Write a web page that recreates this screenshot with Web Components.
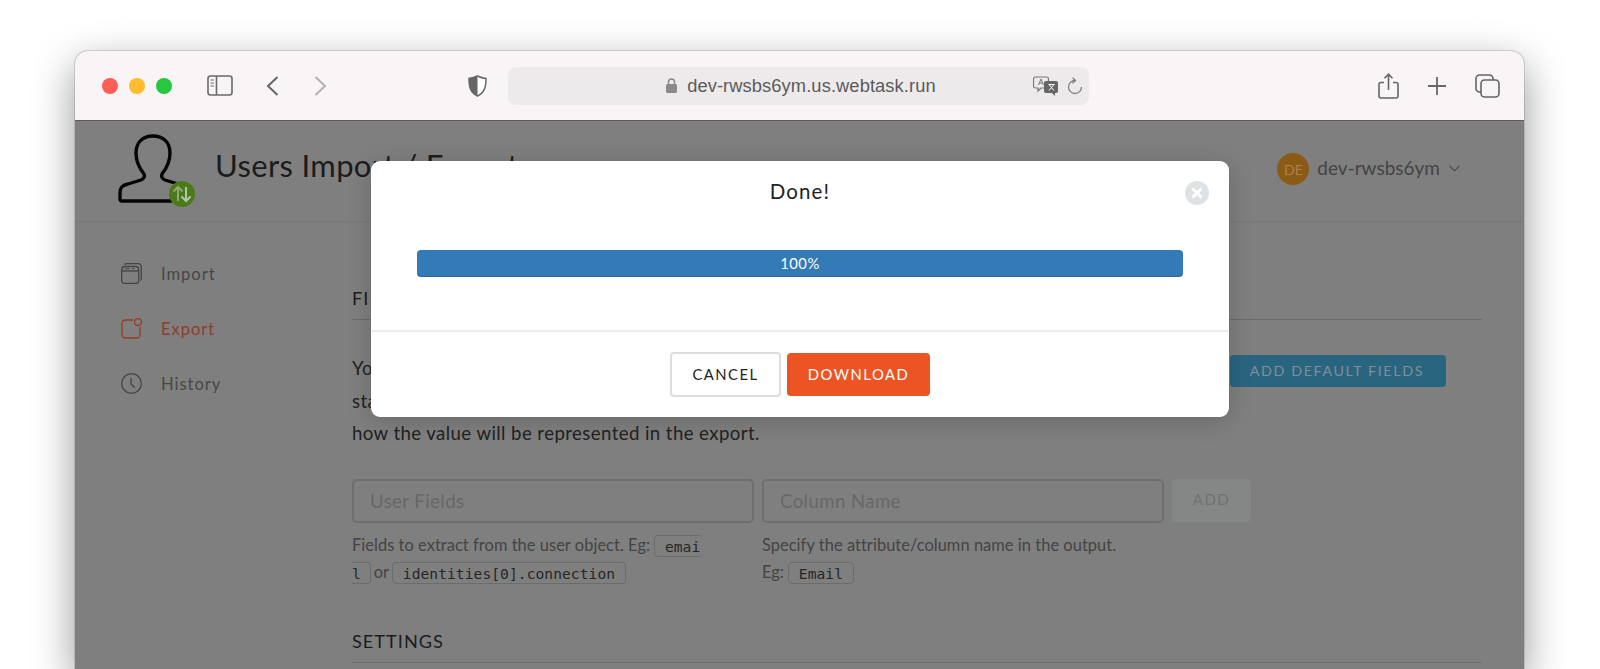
<!doctype html>
<html><head><meta charset="utf-8"><title>Users Import / Export</title>
<style>
html,body{margin:0;height:669px;overflow:hidden;background:#fff;font-family:Lato,"Noto Sans",sans-serif}
</style></head><body>
<browser-window>
  <browser-toolbar slot="toolbar"></browser-toolbar>
  <app-header></app-header>
  <app-body></app-body>
  <modal-dialog slot="modal"></modal-dialog>
</browser-window>
<script>
function def(name,html){
  customElements.define(name,class extends HTMLElement{
    constructor(){super();this.attachShadow({mode:'open'}).innerHTML=html;}
  });
}
def('browser-window',`<style>
:host{display:block;position:relative;margin:51px 0 0 75px;width:1449px;height:618px;border-radius:13px 13px 0 0;box-shadow:0 14px 42px rgba(0,0,0,.42),0 0 0 1px rgba(0,0,0,.12);overflow:visible}
.clip{height:100%;border-radius:13px 13px 0 0;overflow:hidden;background:#7f7f7f;position:relative}
.layer{position:absolute;left:1px;right:0;top:70px;bottom:0;display:flex;justify-content:center;align-items:flex-start;padding-top:40px}
</style><div class="clip"><slot name="toolbar"></slot><slot></slot><div class="layer"><slot name="modal"></slot></div></div>`);

def('browser-toolbar',`<style>
:host{display:flex;align-items:center;height:69px;background:#f9f5f6;border-bottom:1px solid #5c5c5c;padding:0 24px 0 27px;box-sizing:content-box;color:#666;position:relative}
.dot{width:16px;height:16px;border-radius:50%;margin-right:11.500px}
svg{display:block;flex:none}
.url{width:588px;height:38px;margin-left:21px;background:#edeaeb;border-radius:8px;display:flex;align-items:center;position:relative;box-sizing:border-box;padding-left:158px}
.url span{font:18.300px "Liberation Sans",Arial,sans-serif;letter-spacing:.1px;color:#5b5b5b;margin-left:10px;white-space:nowrap}
</style>
<div class="dot" style="background:#ff5f57"></div><div class="dot" style="background:#febc2e"></div><div class="dot" style="background:#28c840;margin-right:35px"></div>
<svg width="26" height="21" viewBox="0 0 26 21" fill="none" stroke="#6a6a6a" stroke-width="1.6"><rect x="1" y="1" width="24" height="19" rx="2.5"/><path d="M9.5 1v19"/><path d="M3.5 5h3.5M3.5 8h3.5M3.5 11h3.5" stroke-width="1.2"/></svg>
<svg style="margin-left:33px" width="13" height="20" viewBox="0 0 13 20" fill="none" stroke="#666" stroke-width="2"><path d="M11.5 1L2 10l9.5 9"/></svg>
<svg style="margin-left:35px" width="13" height="20" viewBox="0 0 13 20" fill="none" stroke="#b3b1b2" stroke-width="2"><path d="M1.5 1L11 10l-9.5 9"/></svg>
<svg style="margin-left:141px" width="19" height="22" viewBox="0 0 19 22"><path d="M9.5 1C6.5 2.6 3.8 3.2 1 3.4c0 8 1.2 14 8.5 17.6C16.8 17.400 18 11.400 18 3.400 15.200 3.200 12.500 2.600 9.500 1z" fill="#fff" stroke="#666" stroke-width="1.500"/><path d="M9.500 1C6.500 2.600 3.800 3.200 1 3.400c0 8 1.200 14 8.500 17.600z" fill="#666"/></svg>
<div class="url">
  <svg width="11" height="15" viewBox="0 0 11 15"><rect x="0" y="6" width="11" height="9" rx="1.500" fill="#8a8a8a"/><path d="M2.500 6.500V4a3 3 0 0 1 6 0v2.500" fill="none" stroke="#8a8a8a" stroke-width="1.500"/></svg>
  <span>dev-rwsbs6ym.us.webtask.run</span>
  <svg style="position:absolute;left:525px;top:9px" width="25" height="20" viewBox="0 0 25 20"><path d="M2.500 1h11a2 2 0 0 1 2 2v7a2 2 0 0 1-2 2H8l-3 3v-3H2.500a2 2 0 0 1-2-2V3a2 2 0 0 1 2-2z" fill="none" stroke="#777" stroke-width="1.200"/><path d="M5.500 9l2.500-6 2.500 6M6.500 7h3" fill="none" stroke="#777" stroke-width="1"/><path d="M13 5h10a2 2 0 0 1 2 2v8a2 2 0 0 1-2 2h-1v3l-3-3h-6a2 2 0 0 1-2-2V7a2 2 0 0 1 2-2z" fill="#666"/><path d="M16 8.500l5 6M21 8.500l-5 6M15.500 8.500h6" fill="none" stroke="#fff" stroke-width="1"/></svg>
  <svg style="position:absolute;left:559px;top:10px" width="16" height="19" viewBox="0 0 16 19" fill="none" stroke="#808080" stroke-width="1.300"><path d="M8 3.500A6.500 6.500 0 1 0 14.500 10"/><path d="M5.500 .8L8.500 3.500 5.500 6.200"/></svg>
</div>
<svg style="margin-left:289.500px" width="21" height="26" viewBox="0 0 21 26" fill="none" stroke="#666" stroke-width="1.600"><path d="M6 9.500H3a2 2 0 0 0-2 2V23a2 2 0 0 0 2 2h15a2 2 0 0 0 2-2V11.500a2 2 0 0 0-2-2h-3"/><path d="M10.500 17V1.500M6.500 5.200l4-4 4 4"/></svg>
<svg style="margin-left:28px" width="20" height="20" viewBox="0 0 20 20" stroke="#666" stroke-width="1.800"><path d="M10 1v18M1 10h18"/></svg>
<svg style="margin-left:28px" width="25" height="24" viewBox="0 0 25 24" fill="none" stroke="#666" stroke-width="1.600"><path d="M6 18H4.500A3.500 3.500 0 0 1 1 14.500v-10A3.500 3.500 0 0 1 4.500 1h10A3.500 3.500 0 0 1 18 4.500V6"/><rect x="6" y="6" width="18" height="17" rx="3.500"/></svg>`);

def('app-header',`<style>
:host{display:flex;align-items:flex-start;height:101px;border-bottom:1px solid #787878;box-sizing:border-box;position:relative;padding-left:43px}
.logo{position:relative;width:76px;height:72px;margin-top:13px;flex:none}
h1{margin:24px 0 0 21px;font:400 31px/40px Lato,sans-serif;color:#1c1c1c;letter-spacing:.35px;white-space:nowrap}
.badge{position:absolute;left:51px;top:47px;width:26px;height:26px;border-radius:50%;background:#4a7a19;display:flex;align-items:center;justify-content:center}
.user{margin-left:auto;margin-right:64px;margin-top:32px;display:flex;align-items:center;height:32px;color:#444;font:19px Lato,sans-serif}
.name{position:relative;top:-2px}
.av{width:32px;height:32px;border-radius:50%;background:#8b5a14;color:#b0814a;font-size:14px;display:flex;align-items:center;justify-content:center;margin-right:8px}
.user svg{margin-left:9px;position:relative;top:-1px}
</style>
<div class="logo">
<svg width="70" height="72" viewBox="0 0 70 72" fill="none" stroke="#050505" stroke-width="3.400" stroke-linejoin="round"><path d="M54 67H4c-1.500 0-2-.5-2-2v-6c0-6 3-8 8-9l13-4c3-1 4-4 3-6-4-5-8-11-8-21C18 8 25 2 35 2s17 6 17 17c0 10-4 16-8 21-1 2 0 5 3 6l13 4"/></svg>
<div class="badge"><svg width="20" height="18" viewBox="0 0 20 18" fill="none" stroke="#8fa878" stroke-width="2"><path d="M6 16V2M1.500 6.500L6 2l4.500 4.500"/><path d="M14 2v14M9.500 11.500L14 16l4.500-4.500" stroke="#b4c4a4"/></svg></div>
</div>
<h1>Users Import / Export</h1>
<div class="user"><div class="av">DE</div><span class="name">dev-rwsbs6ym</span><svg width="11" height="7" viewBox="0 0 11 7" fill="none" stroke="#4a4a4a" stroke-width="1.100"><path d="M.5 .8l5 5 5-5"/></svg></div>`);

def('side-item',`<style>
:host{display:flex;align-items:center;height:55px;color:var(--c,#474747);font:16.600px Lato,sans-serif;letter-spacing:.95px}
</style><slot></slot>`);

def('app-body',`<style>
:host{display:flex;align-items:flex-start}
nav{width:230px;padding:24px 0 0 46px;box-sizing:border-box;flex:none}
side-item svg{width:21px;height:21px;margin-right:19px;flex:none;fill:none;stroke-width:1.300}
main{margin-left:47px;width:1130px;flex:none}
</style>
<nav>
<side-item><svg viewBox="0 0 21 21" stroke="#454545"><rect x=".7" y="3.500" width="17" height="17" rx="3"/><path d="M.7 8h17" /><path d="M3.500 1.500C4 .9 5 .7 6 .7h11c2 0 3.300 1.300 3.300 3.300v11c0 1-.3 2-.9 2.500"/><path d="M3.500 5.800h5M11 5.800h2" stroke-width="1"/></svg>Import</side-item>
<side-item style="--c:#8e3e28"><svg viewBox="0 0 21 21" stroke="#973c1f"><path d="M12 2H4.500A3.500 3.500 0 0 0 1 5.500v11A3.500 3.500 0 0 0 4.500 20h11a3.500 3.500 0 0 0 3.500-3.500V9"/><circle cx="17" cy="4" r="3.500"/></svg>Export</side-item>
<side-item><svg viewBox="0 0 21 21" stroke="#454545"><circle cx="10.500" cy="10.500" r="9.800"/><path d="M10 5v6l3.800 3.500"/></svg>History</side-item>
</nav>
<main><export-form></export-form></main>`);

def('code-chip',`<style>
:host{display:inline;font:14.600px/20px "DejaVu Sans Mono",monospace;color:#262626;border:1px solid #6c6c6c;border-radius:4px;padding:1.500px 9.500px;-webkit-box-decoration-break:slice;box-decoration-break:slice;word-break:break-all}
</style><slot></slot>`);

def('section-title',`<style>
:host{display:block;border-bottom:1px solid #6c6c6c;font:18.200px/24px Lato,sans-serif;color:#1c1c1c;letter-spacing:1px;padding-bottom:9px}
</style><slot></slot>`);

def('export-form',`<style>
:host{display:block;padding-top:64px;width:1130px}
section-title{margin-bottom:32px}
.intro{position:relative;font:18.600px/32.600px Lato,sans-serif;letter-spacing:.42px;color:#222;margin:0 0 29.500px}
.def{position:absolute;left:878px;top:3px;height:32px;width:216px;box-sizing:border-box;border-radius:4px;background:#2a6580;color:#7f8f98;font:14.300px/32px Lato,sans-serif;letter-spacing:1.600px;text-align:right;padding-right:22px}
.row{display:grid;grid-template-columns:402px 402px 79px;column-gap:8px}
.in{height:44px;box-sizing:border-box;border:2px solid #6e6e6e;border-radius:5px;padding:0 16px;font:18.600px/40px Lato,sans-serif;letter-spacing:.42px;color:#676767}
.add{height:43px;border-radius:4px;background:#848786;color:#6f7272;font:15px/41px Lato,sans-serif;letter-spacing:1.500px;text-align:center}
.help{font:16.400px/27px Lato,sans-serif;letter-spacing:.06px;color:#444;margin-top:8px;width:350px}
.help.w{width:402px}
.or{margin:0 -1px 0 -2px}
section-title.s{margin-top:44px}
</style>
<section-title>FIELDS</section-title>
<div class="intro">You can add fields to the export<br>standard<br>how the value will be represented in the export.<div class="def">ADD DEFAULT FIELDS</div></div>
<div class="row">
  <div><div class="in">User Fields</div><div class="help">Fields to extract from the user object. Eg: <code-chip>email</code-chip> <span class="or">or</span> <code-chip>identities[0].connection</code-chip></div></div>
  <div><div class="in">Column Name</div><div class="help w">Specify the attribute/column name in the output.<br>Eg: <code-chip>Email</code-chip></div></div>
  <div class="add">ADD</div>
</div>
<section-title class="s">SETTINGS</section-title>`);

def('modal-dialog',`<style>
:host{display:block;position:relative;width:858px;height:256px;background:#fff;border-radius:9px;box-shadow:0 4px 24px rgba(0,0,0,.18);box-sizing:border-box}
h2{margin:0;padding-top:15px;font:400 20.500px/30px Lato,sans-serif;color:#222;text-align:center;letter-spacing:1.100px}
.x{position:absolute;left:814px;top:20px;width:24px;height:24px;border-radius:50%;background:#dfe2e5;display:flex;align-items:center;justify-content:center}
.bar{margin:44px 46px 0 46px;height:27px;border-radius:4px;background:#337ab7;box-shadow:inset 0 -1px 0 rgba(0,0,0,.15);color:#fff;font:14.800px/27px Lato,sans-serif;letter-spacing:.5px;text-align:center}
.foot{margin-top:53px;border-top:2px solid #eee;height:84px;display:flex;justify-content:center;align-items:center;gap:6px}
.b{box-sizing:border-box;height:45px;display:flex;align-items:center;justify-content:center;font:14.800px Lato,sans-serif;letter-spacing:1.500px;border-radius:4px}
.c{width:111px;border:2px solid #ddd;color:#222;background:#fff}
.d{width:143px;height:43px;background:#ec5424;color:#fff}
</style>
<h2>Done!</h2>
<div class="x"><svg width="12" height="12" viewBox="0 0 12 12" stroke="#fff" stroke-width="3"><path d="M1.500 1.500l9 9M10.500 1.500l-9 9"/></svg></div>
<div class="bar">100%</div>
<div class="foot"><div class="b c">CANCEL</div><div class="b d">DOWNLOAD</div></div>`);
</script>
</body></html>
